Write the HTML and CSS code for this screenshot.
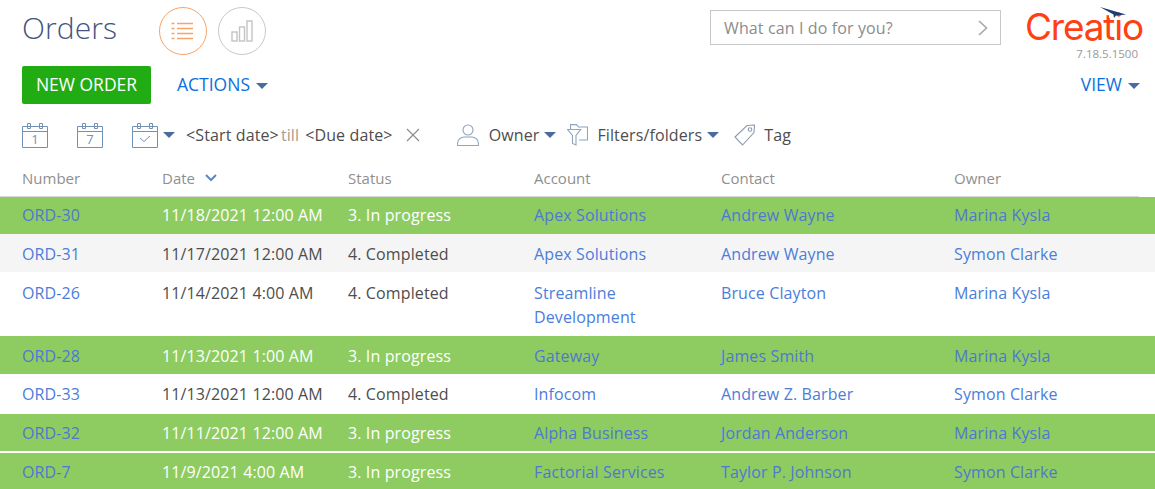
FILE: index.html
```html
<!DOCTYPE html>
<html lang="en">
<head>
<meta charset="utf-8">
<title>Orders</title>
<link rel="stylesheet" href="styles.css">
</head>
<body>
<div class="page">
  <header class="top">
    <h1 class="title">Orders</h1>
    <div class="modes">
      <button class="mode mode-on" aria-label="List">
        <svg width="24" height="18" viewBox="0 0 24 18" fill="none" stroke="#f8a467" stroke-width="1.4">
          <path d="M0.5 1.500h3M6 1.500h16M0.500 6.500h3M6 6.500h16M0.500 11.500h3M6 11.500h16M0.500 16.500h3M6 16.500h16"/>
        </svg>
      </button>
      <button class="mode" aria-label="Chart">
        <svg width="22" height="22" viewBox="0 0 22 22" fill="none" stroke="#c4c4c4" stroke-width="1.4">
          <rect x="1" y="12" width="5" height="9"/><rect x="8.500" y="7" width="5" height="14"/><rect x="16" y="1" width="5" height="20"/>
        </svg>
      </button>
    </div>
    <div class="search">
      <span class="search-text">What can I do for you?</span>
      <svg class="search-go" width="10" height="16" viewBox="0 0 10 16" fill="none" stroke="#a8a8a8" stroke-width="1.6"><path d="M1 1l7.500 7L1 15"/></svg>
    </div>
    <div class="brand">
      <div class="logo">
        <span class="logo-text">Creatio</span>
        <svg class="logo-wing" width="28" height="14" viewBox="0 0 28 14"><rect x="10" y="4" width="7" height="7" fill="#fff"/><path d="M1 0L27 7.500 17 8.500 15 11 14.500 7.500Z" fill="#1f3b73"/></svg>
      </div>
      <div class="version">7.18.5.1500</div>
    </div>
  </header>

  <div class="actions">
    <button class="primary">NEW ORDER</button>
    <span class="menu">ACTIONS<i class="caret"></i></span>
    <span class="menu menu-end">VIEW<i class="caret"></i></span>
  </div>

  <div class="filters">
    <svg class="cal" width="26" height="26" viewBox="0 0 26 26" fill="none" stroke="#7391b5"><path d="M.5 4.500h25v21H.5zM.5 9.500h25M5.500 1.500v5h3v-5zM17.500 1.500v5h3v-5z"/><text x="13" y="22" class="cal-num">1</text></svg>
    <svg class="cal" width="26" height="26" viewBox="0 0 26 26" fill="none" stroke="#7391b5"><path d="M.5 4.500h25v21H.5zM.5 9.500h25M5.500 1.500v5h3v-5zM17.500 1.500v5h3v-5z"/><text x="13" y="22" class="cal-num">7</text></svg>
    <svg class="cal" width="26" height="26" viewBox="0 0 26 26" fill="none" stroke="#7391b5"><path d="M.5 4.500h25v21H.5zM.5 9.500h25M5.500 1.500v5h3v-5zM17.500 1.500v5h3v-5zM8 16l4 3.500 6-5.500"/></svg>
    <i class="caret caret-cal"></i>
    <span class="dates"><span>&lt;Start date&gt;</span><span class="till">till</span><span>&lt;Due date&gt;</span></span>
    <svg class="clear" width="14" height="14" viewBox="0 0 14 14" fill="none" stroke="#8a8a8a" stroke-width="1.1"><path d="M1 1l12 12M13 1L1 13"/></svg>
    <span class="fitem fitem-owner">
      <svg width="22" height="22" viewBox="0 0 22 22" fill="none" stroke="#8ea4bf" stroke-width="1.1"><circle cx="11" cy="6" r="5"/><path d="M.6 21.500v-2.500c0-3.500 3.500-6 6.400-6h8c3 0 6.400 2.500 6.400 6v2.500z"/></svg>
      Owner<i class="caret"></i>
    </span>
    <span class="fitem fitem-folder">
      <svg width="21" height="22" viewBox="0 0 21 22" fill="none" stroke="#8ea4bf" stroke-width="1.1"><path d="M3.500 5V.6h6l2 2.400h9v13H12M.6 5.500h13L9 11.500v9.500l-3.500-1.500V11.500z"/></svg>
      Filters/folders<i class="caret"></i>
    </span>
    <span class="fitem fitem-tag">
      <svg width="22" height="22" viewBox="0 0 22 22" fill="none" stroke="#8a9cb3" stroke-width="1.1"><path d="M1 13L13 1.500l7.500-.5-.5 7.500L8.500 21z"/><circle cx="16" cy="5.500" r="1.800"/></svg>
      Tag
    </span>
  </div>

  <div class="grid-head">
    <span>Number</span>
    <span>Date <svg class="sort" width="12" height="8" viewBox="0 0 12 8" fill="none" stroke="#5b86c9" stroke-width="2"><path d="M1 1l5 5 5-5"/></svg></span>
    <span>Status</span>
    <span>Account</span>
    <span>Contact</span>
    <span>Owner</span>
  </div>

  <div class="grid">
    <div class="row hot">
      <a>ORD-30</a><span class="strong">11/18/2021 12:00 AM</span><span class="strong">3. In progress</span><a>Apex Solutions</a><a>Andrew Wayne</a><a>Marina Kysla</a>
    </div>
    <div class="row alt">
      <a>ORD-31</a><span>11/17/2021 12:00 AM</span><span>4. Completed</span><a>Apex Solutions</a><a>Andrew Wayne</a><a>Symon Clarke</a>
    </div>
    <div class="row">
      <a>ORD-26</a><span>11/14/2021 4:00 AM</span><span>4. Completed</span><a>Streamline Development</a><a>Bruce Clayton</a><a>Marina Kysla</a>
    </div>
    <div class="row hot">
      <a>ORD-28</a><span class="strong">11/13/2021 1:00 AM</span><span class="strong">3. In progress</span><a>Gateway</a><a>James Smith</a><a>Marina Kysla</a>
    </div>
    <div class="row">
      <a>ORD-33</a><span>11/13/2021 12:00 AM</span><span>4. Completed</span><a>Infocom</a><a>Andrew Z. Barber</a><a>Symon Clarke</a>
    </div>
    <div class="row hot">
      <a>ORD-32</a><span class="strong">11/11/2021 12:00 AM</span><span class="strong">3. In progress</span><a>Alpha Business</a><a>Jordan Anderson</a><a>Marina Kysla</a>
    </div>
    <div class="row hot">
      <a>ORD-7</a><span class="strong">11/9/2021 4:00 AM</span><span class="strong">3. In progress</span><a>Factorial Services</a><a>Taylor P. Johnson</a><a>Symon Clarke</a>
    </div>
  </div>
</div>
</body>
</html>
```
FILE: styles.css
```css
* { box-sizing: border-box; }
html, body { margin: 0; padding: 0; height: 489px; overflow: hidden; background: #fff; }
body { font-family: "Open Sans", sans-serif; font-size: 16px; line-height: 24px; letter-spacing: .12px; color: #4d4d4d; }
.page { display: flex; flex-direction: column; }

.top { display: flex; align-items: flex-start; height: 66px; padding-left: 22px; }
.title { margin: 8px 0 0; width: 137px; font-size: 30px; line-height: 40px; font-weight: 300; letter-spacing: .1px; color: #44537f; }
.modes { display: flex; gap: 11px; padding-top: 7px; }
.mode { width: 48px; height: 48px; padding: 0; border: 1px solid #c9c9c9; border-radius: 50%; background: #fff; display: flex; align-items: center; justify-content: center; }
.mode-on { border-color: #f8a467; }
.search { display: flex; align-items: center; justify-content: space-between; width: 291px; height: 35px; margin: 10px 0 0 444px; padding: 0 12px 0 13px; border: 1px solid #c8c8c8; }
.search-text { color: #8c8c8c; }
.search-go { display: block; }
.brand { margin-left: 24px; width: 129px; }
.logo { position: relative; height: 44px; padding-top: 9px; }
.logo-text { display: block; font-family: "Inter", sans-serif; font-size: 37px; line-height: 36px; font-weight: 400; letter-spacing: -1.2px; color: #ff4013; }
.logo-wing { position: absolute; left: 74px; top: 7px; }
.version { margin-top: 2px; padding-right: 16px; text-align: right; font-size: 11.500px; line-height: 16px; letter-spacing: 0; color: #999; white-space: nowrap; }

.actions { display: flex; align-items: center; height: 38px; padding: 0 15px 0 22px; }
.primary { width: 129px; height: 38px; padding: 0 0 2px; border: 0; border-radius: 2px; background: #22ac14; color: #fff; font: 400 17.500px/24px "Open Sans", sans-serif; }
.menu { margin-left: 26px; padding-bottom: 2px; font-size: 17.500px; letter-spacing: 0; color: #0d6fe0; }
.menu-end { margin-left: auto; }
.caret { display: inline-block; width: 0; height: 0; margin-left: 6px; vertical-align: 2px; border-style: solid; border-width: 6px 6px 0; border-color: #4a6b9d transparent transparent; }

.filters { display: flex; align-items: center; height: 44px; margin-top: 9px; padding-left: 22px; }
.cal { flex: none; margin-right: 29px; }
.cal:nth-of-type(3) { margin-right: 0; }
.cal-num { font: 400 13px "Open Sans", sans-serif; fill: #7391b5; stroke: none; text-anchor: middle; }
.caret-cal { margin-left: 5px; }
.dates { display: flex; margin-left: 11px; gap: 2px; white-space: nowrap; }
.till { color: #a89c8c; margin-right: 4px; }
.clear { margin-left: 13px; flex: none; }
.fitem { display: flex; align-items: center; white-space: nowrap; }
.fitem-owner { margin-left: 37px; gap: 10px; }
.fitem-owner .caret { margin-left: -5px; }
.fitem-folder { margin-left: 11px; gap: 9px; }
.fitem-folder .caret { margin-left: -4px; }
.fitem-tag { margin-left: 15px; gap: 8px; }

.grid-head, .row { display: grid; grid-template-columns: 140px 186px 186px 187px 233px 1fr; padding-left: 22px; }
.grid-head { height: 40px; margin-right: 16px; padding-top: 9px; font-size: 15px; letter-spacing: 0; color: #8f8f8f; border-bottom: 1px solid #d9d9d9; }
.sort { margin-left: 6px; vertical-align: 2px; }
.row { padding-top: 8px; padding-bottom: 6px; }
.row a { color: #4b7ddb; padding-right: 20px; }
.row.hot { background: #8ecc62; }
.row.hot a { color: #4f78d0; }
.row.alt { background: #f5f5f5; }
.strong { font-weight: 500; color: #fff; }
.row:nth-child(1) { padding-top: 6px; padding-bottom: 7px; }
.row:nth-child(3) { padding-top: 9px; padding-bottom: 7px; }
.row:nth-child(5) { padding-bottom: 8px; }
.row:nth-child(6) { padding-top: 7px; margin-bottom: 2px; }
.row:nth-child(7) { padding-top: 7px; padding-bottom: 5px; }
```
